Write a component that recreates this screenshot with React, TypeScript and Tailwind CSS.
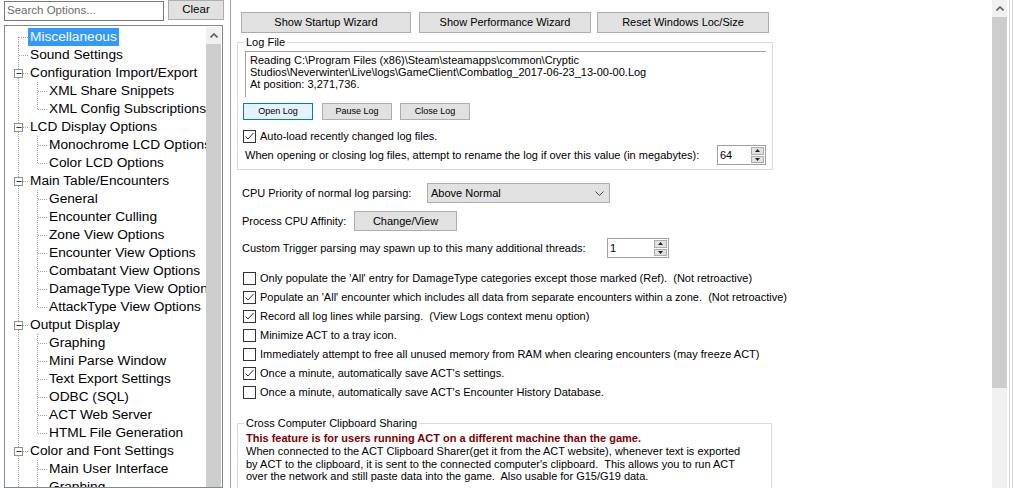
import React from "react";

type Node = { label: string; children?: string[]; selected?: boolean };

const tree: Node[] = [
  { label: "Miscellaneous", selected: true },
  { label: "Sound Settings" },
  { label: "Configuration Import/Export", children: ["XML Share Snippets", "XML Config Subscriptions"] },
  { label: "LCD Display Options", children: ["Monochrome LCD Options", "Color LCD Options"] },
  {
    label: "Main Table/Encounters",
    children: [
      "General",
      "Encounter Culling",
      "Zone View Options",
      "Encounter View Options",
      "Combatant View Options",
      "DamageType View Options",
      "AttackType View Options",
    ],
  },
  {
    label: "Output Display",
    children: [
      "Graphing",
      "Mini Parse Window",
      "Text Export Settings",
      "ODBC (SQL)",
      "ACT Web Server",
      "HTML File Generation",
    ],
  },
  { label: "Color and Font Settings", children: ["Main User Interface", "Graphing", "Mini Parse Window"] },
];

const options: { checked: boolean; text: string }[] = [
  { checked: false, text: "Only populate the 'All' entry for DamageType categories except those marked (Ref).  (Not retroactive)" },
  { checked: true, text: "Populate an 'All' encounter which includes all data from separate encounters within a zone.  (Not retroactive)" },
  { checked: true, text: "Record all log lines while parsing.  (View Logs context menu option)" },
  { checked: false, text: "Minimize ACT to a tray icon." },
  { checked: false, text: "Immediately attempt to free all unused memory from RAM when clearing encounters (may freeze ACT)" },
  { checked: true, text: "Once a minute, automatically save ACT's settings." },
  { checked: false, text: "Once a minute, automatically save ACT's Encounter History Database." },
];

function RootGutter({ first, expandable }: { first: boolean; expandable: boolean }) {
  return (
    <svg width="23" height="18" className="shrink-0">
      <line x1="13.5" y1={first ? 9 : 0} x2="13.5" y2="18" stroke="#a0a0a0" strokeDasharray="1 1" />
      <line x1="14" y1="9.5" x2="23" y2="9.5" stroke="#a0a0a0" strokeDasharray="1 1" />
      {expandable && (
        <>
          <rect x="9.5" y="5.5" width="8" height="8" fill="#fff" stroke="#919191" />
          <line x1="11.5" y1="9.5" x2="16.5" y2="9.5" stroke="#333" />
        </>
      )}
    </svg>
  );
}

function ChildGutter({ last }: { last: boolean }) {
  return (
    <>
      <svg width="23" height="18" className="shrink-0">
        <line x1="13.5" y1="0" x2="13.5" y2="18" stroke="#a0a0a0" strokeDasharray="1 1" />
      </svg>
      <svg width="19" height="18" className="shrink-0">
        <line x1="9.5" y1="0" x2="9.5" y2={last ? 9 : 18} stroke="#a0a0a0" strokeDasharray="1 1" />
        <line x1="10" y1="9.5" x2="19" y2="9.5" stroke="#a0a0a0" strokeDasharray="1 1" />
      </svg>
    </>
  );
}

function UpChevron() {
  return (
    <svg width="8" height="5" viewBox="0 0 8 5">
      <polyline points="0.5,4.5 4,1 7.5,4.5" fill="none" stroke="#606060" strokeWidth="1.6" />
    </svg>
  );
}

function CheckBox({ checked }: { checked: boolean }) {
  return (
    <span className="flex h-[13px] w-[13px] shrink-0 items-center justify-center border border-[#333] bg-white">
      {checked && (
        <svg width="11" height="11" viewBox="0 0 11 11">
          <polyline points="1.5,5.5 4,8 9.5,2" fill="none" stroke="#333" strokeWidth="1" />
        </svg>
      )}
    </span>
  );
}

function Spin({ value, width }: { value: string; width: string }) {
  return (
    <div className={`flex h-[20px] border border-[#a0a0a0] bg-white ${width}`}>
      <span className="flex-1 pl-[2px] leading-[18px]">{value}</span>
      <div className="flex w-[15px] flex-col gap-[1px] p-[1px]">
        <div className="flex flex-1 items-center justify-center border border-[#adadad] bg-[#e1e1e1]">
          <svg width="5" height="3" viewBox="0 0 5 3">
            <polygon points="0,3 2.5,0 5,3" fill="#222" />
          </svg>
        </div>
        <div className="flex flex-1 items-center justify-center border border-[#adadad] bg-[#e1e1e1]">
          <svg width="5" height="3" viewBox="0 0 5 3">
            <polygon points="0,0 2.5,3 5,0" fill="#222" />
          </svg>
        </div>
      </div>
    </div>
  );
}

export default function App() {
  return (
    <div className="flex h-[488px] w-[1013px] overflow-hidden bg-white font-['Liberation_Sans',Arial,sans-serif] text-black">
      {/* left: search + tree */}
      <div className="flex w-[230px] shrink-0 flex-col">
        <div className="flex items-start">
          <div className="ml-[4px] mt-[1px] flex h-[20px] w-[160px] items-center border border-[#7a7a7a] px-[2px] text-[11.5px] text-[#6d6d6d]">
            Search Options...
          </div>
          <button className="ml-[4px] h-[20px] w-[56px] border border-[#adadad] bg-[#e1e1e1] text-[11.5px]">
            Clear
          </button>
        </div>
        <div className="ml-[4px] mt-[4px] flex w-[219px] flex-1 overflow-hidden border border-[#828790] pt-[1px]">
          <div className="flex-1 overflow-hidden pt-[1px] text-[13.7px]">
            {tree.map((n, i) => (
              <React.Fragment key={n.label}>
                <div className="flex h-[18px] items-center whitespace-nowrap">
                  <RootGutter first={i === 0} expandable={Boolean(n.children)} />
                  <span
                    className={`px-[2px] leading-[18px] ${n.selected ? "bg-[#3399ff] text-white" : ""}`}
                  >
                    {n.label}
                  </span>
                </div>
                {n.children?.map((c, j) => (
                  <div key={c + j} className="flex h-[18px] items-center whitespace-nowrap">
                    <ChildGutter last={j === n.children!.length - 1} />
                    <span className="px-[2px] leading-[18px]">{c}</span>
                  </div>
                ))}
              </React.Fragment>
            ))}
          </div>
          <div className="mr-[1px] flex w-[15px] shrink-0 flex-col">
            <div className="flex h-[17px] items-center justify-center bg-[#f0f0f0]">
              <UpChevron />
            </div>
            <div className="flex-1 bg-[#cdcdcd]" />
          </div>
        </div>
      </div>

      {/* right: options panel */}
      <div className="flex flex-1 border-l border-[#a0a0a0]">
        <div className="flex-1 overflow-hidden text-[11px]">
          <div className="flex pl-[10px] pt-[12px]">
            <button className="h-[21px] w-[170px] border border-[#adadad] bg-[#e1e1e1]">Show Startup Wizard</button>
            <button className="ml-[8px] h-[21px] w-[172px] border border-[#adadad] bg-[#e1e1e1]">
              Show Performance Wizard
            </button>
            <button className="ml-[6px] h-[21px] w-[172px] border border-[#adadad] bg-[#e1e1e1]">
              Reset Windows Loc/Size
            </button>
          </div>

          <fieldset className="ml-[6px] mt-[3px] w-[536px] border border-[#dcdcdc] pb-[4px]">
            <legend className="ml-[6px] px-[2px] leading-[12px]">Log File</legend>
            <div className="ml-[7px] mt-[3px] h-[46px] w-[521px] border-l border-t border-[#a0a0a0] pl-[4px] pt-[2px] leading-[12px]">
              <div>Reading C:\Program Files (x86)\Steam\steamapps\common\Cryptic</div>
              <div>Studios\Neverwinter\Live\logs\GameClient\Combatlog_2017-06-23_13-00-00.Log</div>
              <div>At position: 3,271,736.</div>
            </div>
            <div className="mt-[6px] flex pl-[5px] text-[9px]">
              <button className="h-[17px] w-[70px] overflow-hidden border border-[#0078d7] bg-[#e5f1fb] leading-[15px]">
                Open Log
              </button>
              <button className="ml-[9px] h-[17px] w-[70px] overflow-hidden border border-[#adadad] bg-[#e1e1e1] leading-[15px]">
                Pause Log
              </button>
              <button className="ml-[8px] h-[17px] w-[70px] overflow-hidden border border-[#adadad] bg-[#e1e1e1] leading-[15px]">
                Close Log
              </button>
            </div>
            <div className="mt-[9px] flex h-[14px] items-center gap-[4px] pl-[5px]">
              <CheckBox checked />
              <span>Auto-load recently changed log files.</span>
            </div>
            <div className="mt-[2px] flex h-[20px] items-center pl-[7px] pr-[6px]">
              <span className="flex-1">
                When opening or closing log files, attempt to rename the log if over this value (in megabytes):
              </span>
              <Spin value="64" width="w-[49px]" />
            </div>
          </fieldset>

          <div className="mt-[13px] flex h-[20px] items-center pl-[11px]">
            <span className="w-[185px]">CPU Priority of normal log parsing:</span>
            <div className="flex h-[20px] w-[183px] items-center border border-[#adadad] bg-[#e1e1e1] pl-[3px] pr-[5px]">
              <span className="flex-1">Above Normal</span>
              <svg width="9" height="5" viewBox="0 0 9 5">
                <polyline points="0.5,0.5 4.5,4.5 8.5,0.5" fill="none" stroke="#444" strokeWidth="1" />
              </svg>
            </div>
          </div>

          <div className="mt-[8px] flex h-[20px] items-center pl-[11px]">
            <span className="w-[112px]">Process CPU Affinity:</span>
            <button className="h-[20px] w-[103px] border border-[#adadad] bg-[#e1e1e1]">Change/View</button>
          </div>

          <div className="mt-[7px] flex h-[20px] items-center pl-[11px]">
            <span className="w-[365px]">Custom Trigger parsing may spawn up to this many additional threads:</span>
            <Spin value="1" width="w-[62px]" />
          </div>

          <div className="mt-[11px] flex flex-col pl-[12px]">
            {options.map((o) => (
              <div key={o.text} className="flex h-[19px] items-center gap-[4px] whitespace-pre">
                <CheckBox checked={o.checked} />
                <span>{o.text}</span>
              </div>
            ))}
          </div>

          <fieldset className="ml-[6px] mt-[15px] w-[535px] border border-[#dcdcdc] pb-[10px]">
            <legend className="ml-[6px] px-[2px] leading-[12px]">Cross Computer Clipboard Sharing</legend>
            <div className="ml-[8px] mt-[3px] whitespace-pre">
              <div className="font-bold leading-[12px] text-[#800000]">
                This feature is for users running ACT on a different machine than the game.
              </div>
              <div className="pt-[1px] leading-[12.5px]">
                <div>When connected to the ACT Clipboard Sharer(get it from the ACT website), whenever text is exported</div>
                <div>by ACT to the clipboard, it is sent to the connected computer's clipboard.  This allows you to run ACT</div>
                <div>over the network and still paste data into the game.  Also usable for G15/G19 data.</div>
              </div>
            </div>
          </fieldset>
        </div>

        <div className="flex w-[15px] shrink-0 flex-col">
          <div className="flex h-[17px] items-center justify-center bg-[#f0f0f0]">
            <UpChevron />
          </div>
          <div className="h-[371px] bg-[#cdcdcd]" />
          <div className="flex-1 bg-[#f0f0f0]" />
        </div>
        <div className="flex w-[6px] shrink-0">
          <div className="w-[2px]" />
          <div className="w-[1px] bg-[#d4d4d4]" />
          <div className="w-[2px]" />
          <div className="w-[1px] bg-[#d4d4d4]" />
        </div>
      </div>
    </div>
  );
}
